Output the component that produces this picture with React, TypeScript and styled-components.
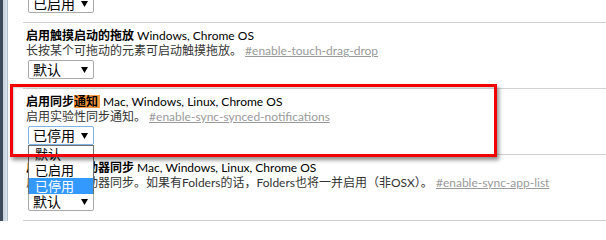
import React from 'react'
import styled, { createGlobalStyle } from 'styled-components'

const GlobalStyle = createGlobalStyle`
  html, body {
    margin: 0;
    padding: 0;
    background: #fff;
    overflow: hidden;
  }
  body {
    font-family: Lato, "Noto Sans CJK SC", sans-serif;
    font-size: 12px;
    color: #222;
  }
`

interface Flag {
  name: string
  highlight?: string
  platforms: string
  description: string
  permalink: string
  value: string
  open?: boolean
}

const OPTIONS = ['默认', '已启用', '已停用']

const flags: Flag[] = [
  {
    name: '',
    platforms: '',
    description: '',
    permalink: '',
    value: '已启用',
  },
  {
    name: '启用触摸启动的拖放',
    platforms: 'Windows, Chrome OS',
    description: '长按某个可拖动的元素可启动触摸拖放。',
    permalink: 'enable-touch-drag-drop',
    value: '默认',
  },
  {
    name: '启用同步',
    highlight: '通知',
    platforms: 'Mac, Windows, Linux, Chrome OS',
    description: '启用实验性同步通知。',
    permalink: 'enable-sync-synced-notifications',
    value: '已停用',
    open: true,
  },
  {
    name: '启用应用启动器同步',
    platforms: 'Mac, Windows, Linux, Chrome OS',
    description: '启用应用启动器同步。如果有Folders的话，Folders也将一并启用（非OSX）。',
    permalink: 'enable-sync-app-list',
    value: '默认',
  },
]

const Arrow = () => (
  <svg width="7" height="6" viewBox="0 0 7 6">
    <polygon points="0,0 7,0 3.5,6" fill="#000" />
  </svg>
)

const App: React.FC = () => (
  <>
    <GlobalStyle />
    <Page>
      <WindowEdge />
      <Experiments>
        {flags.map((flag, i) => (
          <Experiment key={i}>
            <Title>
              <Name>
                {flag.name}
                {flag.highlight && <Mark>{flag.highlight}</Mark>}
              </Name>{' '}
              <span>{flag.platforms || '\u00a0'}</span>
            </Title>
            <Description>
              {flag.description || '\u00a0'}
              {flag.permalink && (
                <>
                  {' '}
                  <Permalink href={`#${flag.permalink}`}>#{flag.permalink}</Permalink>
                </>
              )}
            </Description>
            <Select $focused={flag.open}>
              <span>{flag.value}</span>
              <Arrow />
              {flag.open && (
                <Popup>
                  {OPTIONS.map(o => (
                    <Option key={o} $selected={o === flag.value}>
                      {o}
                    </Option>
                  ))}
                </Popup>
              )}
            </Select>
          </Experiment>
        ))}
      </Experiments>
      <Annotation />
    </Page>
  </>
)

const Page = styled.div`
  position: relative;
  display: flex;
  width: 606px;
  height: 221px;
  overflow: hidden;
`

const WindowEdge = styled.div`
  flex: 0 0 8px;
  background: linear-gradient(
    to right,
    #3d4b5d 0,
    #3d4b5d 3px,
    #c3cedb 3px,
    #dde4ec 7px,
    #b4bfcc 7px,
    #b4bfcc 8px
  );
`

const Experiments = styled.div`
  flex: 1;
  align-self: flex-start;
  margin: -44px 0 0 15px;
  border-bottom: 1px solid #d2d2d2;
`

const Experiment = styled.div`
  box-sizing: border-box;
  height: 66px;
  padding: 5px 0 0 3px;
  border-top: 1px solid #d2d2d2;
`

const Title = styled.div`
  line-height: 15px;
  white-space: nowrap;
  color: #000;
`

const Name = styled.span`
  font-weight: bold;
`

const Mark = styled.span`
  display: inline-block;
  line-height: 13px;
  padding-right: 2px;
  background: #f99a3e;
`

const Description = styled.div`
  line-height: 15px;
  white-space: nowrap;
  color: #333;
`

const Permalink = styled.a`
  color: #9a9a9a;
  text-decoration: underline;
`

const Select = styled.div<{ $focused?: boolean }>`
  position: relative;
  display: flex;
  align-items: center;
  justify-content: space-between;
  box-sizing: border-box;
  width: 66px;
  height: 19px;
  margin: 2px 0 0 2px;
  padding: 0 5px 0 4px;
  border: 1px solid ${p => (p.$focused ? '#7eb4ea' : '#a9a9a9')};
  border-radius: 2px;
  background: #fff;
  font-size: 14px;
  line-height: 17px;
  color: #000;
`

const Popup = styled.div`
  position: absolute;
  top: calc(100% + 1px);
  left: -1px;
  z-index: 2;
  width: 66px;
  box-sizing: border-box;
  border: 1px solid #707070;
  border-bottom: none;
  background: #fff;
`

const Option = styled.div<{ $selected?: boolean }>`
  height: 16px;
  padding-left: 6px;
  font-size: 13px;
  line-height: 16px;
  color: ${p => (p.$selected ? '#fff' : '#000')};
  background: ${p => (p.$selected ? '#3399ff' : '#fff')};
`

const Annotation = styled.div`
  position: absolute;
  left: 10px;
  top: 84px;
  z-index: 3;
  box-sizing: border-box;
  width: 487px;
  height: 73px;
  border: 3px solid #f20000;
  box-shadow: 2px 3px 4px rgba(0, 0, 0, 0.45), inset 1px 1px 2px rgba(0, 0, 0, 0.2);
  pointer-events: none;
`

export default App
